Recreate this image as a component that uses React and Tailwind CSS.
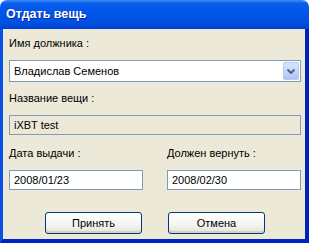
import React from 'react';

const font = "font-['Liberation_Sans',Arial,sans-serif]";

function Label({ children }) {
  return <div className={`h-[13px] leading-[13px] text-[11px] text-black ${font}`}>{children}</div>;
}

function TextBox({ value, readOnly, className = '' }) {
  return (
    <div className={`h-[20px] border border-[#7F9DB9] flex items-center pl-[4px] text-[11px] text-black ${font} ${readOnly ? 'bg-[#EBE8D7]' : 'bg-white'} ${className}`}>
      {value}
    </div>
  );
}

function XpButton({ children }) {
  return (
    <button className={`w-[97px] h-[22px] rounded-[3px] border border-[#003C74] bg-[linear-gradient(#FFFFFF,#F4F4F0_60%,#E3E1D8)] shadow-[inset_0_-2px_0_#D8D2C6] text-[11px] text-black ${font}`}>
      {children}
    </button>
  );
}

export default function App() {
  return (
    <div className="w-[309px] h-[243px] bg-white">
      <div className="w-[309px] h-[243px] flex flex-col rounded-t-[7px] overflow-hidden">
        <div className="h-[29px] flex items-center pl-[6px] bg-[linear-gradient(#3D8DF5,#0A5DEC_12%,#0055EA_45%,#0052E3_75%,#0041D4)]">
          <span className={`text-[12.5px] font-bold text-white [text-shadow:1px_1px_0_#0B2A9A] ${font}`}>Отдать вещь</span>
        </div>
        <div className="flex-1 flex border-l-[3px] border-l-[#0A52E6] border-r-[4px] border-r-[#0020B8] border-b-[4px] border-b-[#0024C4]">
          <div className="flex-1 bg-[#ECE9D8] pl-[6px] pt-[8px] flex flex-col">
            <Label>Имя должника :</Label>
            <div className={`mt-[10px] w-[292px] h-[22px] border border-[#7F9DB9] bg-white flex items-center justify-between text-[11px] text-black ${font}`}>
              <span className="pl-[4px]">Владислав Семенов</span>
              <div className="w-[16px] h-[18px] mr-[1px] rounded-[2px] border border-[#B7C9F2] bg-[linear-gradient(#D9E4FD,#C1D3FB_60%,#AFC3F4)] flex items-center justify-center">
                <svg width="8" height="5" viewBox="0 0 8 5">
                  <path d="M0.5 0.5 L4 4 L7.5 0.5" fill="none" stroke="#4D6185" strokeWidth="2" />
                </svg>
              </div>
            </div>
            <div className="mt-[10px]">
              <Label>Название вещи :</Label>
            </div>
            <TextBox value="iXBT test" readOnly className="mt-[10px] w-[292px]" />
            <div className="mt-[12px] grid grid-cols-[134px_134px] gap-x-[24px]">
              <Label>Дата выдачи :</Label>
              <Label>Должен вернуть :</Label>
              <TextBox value="2008/01/23" className="mt-[10px]" />
              <TextBox value="2008/02/30" className="mt-[10px]" />
            </div>
            <div className="mt-[22px] flex justify-center gap-[26px] pr-[4px]">
              <XpButton>Принять</XpButton>
              <XpButton>Отмена</XpButton>
            </div>
          </div>
        </div>
      </div>
    </div>
  );
}
